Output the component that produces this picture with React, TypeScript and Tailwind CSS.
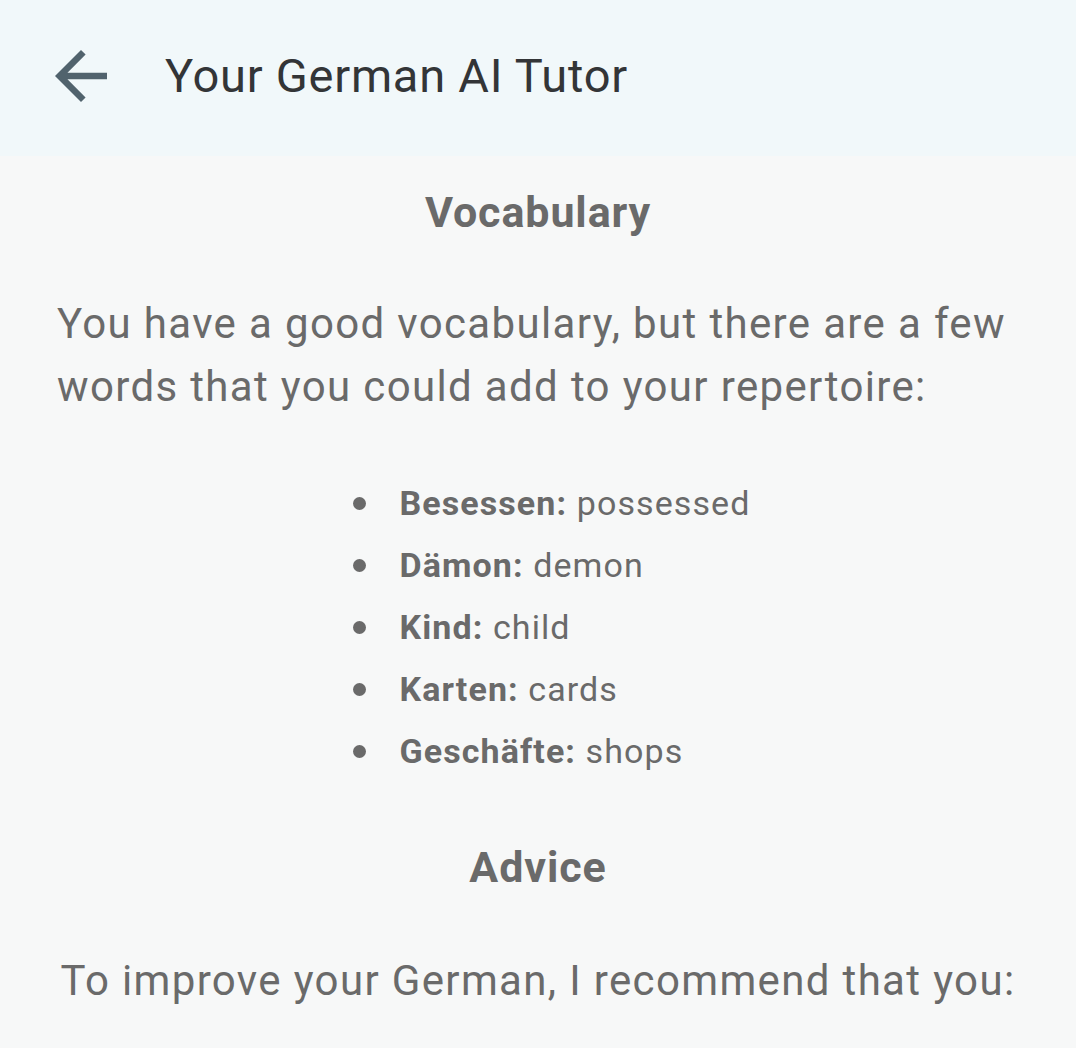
import React from "react";

const items = [
  ["Besessen:", "possessed"],
  ["Dämon:", "demon"],
  ["Kind:", "child"],
  ["Karten:", "cards"],
  ["Geschäfte:", "shops"],
];

export default function App() {
  return (
    <div className="w-[1076px] h-[1048px] overflow-hidden bg-[#f7f8f8] font-['Roboto',sans-serif]">
      <header className="h-[156px] bg-[#f1f8fa] flex items-center pb-[5px]">
        <div className="w-[165px] flex items-center pl-[42px]">
          <svg width="78" height="78" viewBox="0 0 24 24" className="text-[#51636d]">
            <path d="M20 11H7.83l5.59-5.59L12 4l-8 8 8 8 1.41-1.41L7.83 13H20v-2z" fill="currentColor" />
          </svg>
        </div>
        <h1 className="text-[47px] tracking-[0.75px] text-[#333537] leading-none">Your German AI Tutor</h1>
      </header>
      <main className="px-[57px] text-[#6a6a6a]">
        <h2 className="text-center font-bold text-[43px] tracking-[0.9px] leading-none mt-[35px]">Vocabulary</h2>
        <p className="text-[42px] leading-[63px] tracking-[1.35px] mt-[58px]">
          You have a good vocabulary, but there are a few words that you could add to your repertoire:
        </p>
        <div className="flex justify-center mt-[54px]">
          <ul className="flex flex-col pl-[28px]">
            {items.map(([a, b]) => (
              <li key={a} className="flex items-center text-[34px] tracking-[1.1px] leading-[62px]">
                <span className="w-[13px] h-[13px] rounded-full bg-[#6a6a6a] mr-[33px] shrink-0" />
                <span>
                  <b className="font-bold">{a}</b> {b}
                </span>
              </li>
            ))}
          </ul>
        </div>
        <h2 className="text-center font-bold text-[43px] tracking-[0.9px] leading-none mt-[64px]">Advice</h2>
        <p className="text-center text-[42px] leading-[63px] tracking-[1.35px] mt-[60px] whitespace-nowrap">
          To improve your German, I recommend that you:
        </p>
      </main>
    </div>
  );
}
